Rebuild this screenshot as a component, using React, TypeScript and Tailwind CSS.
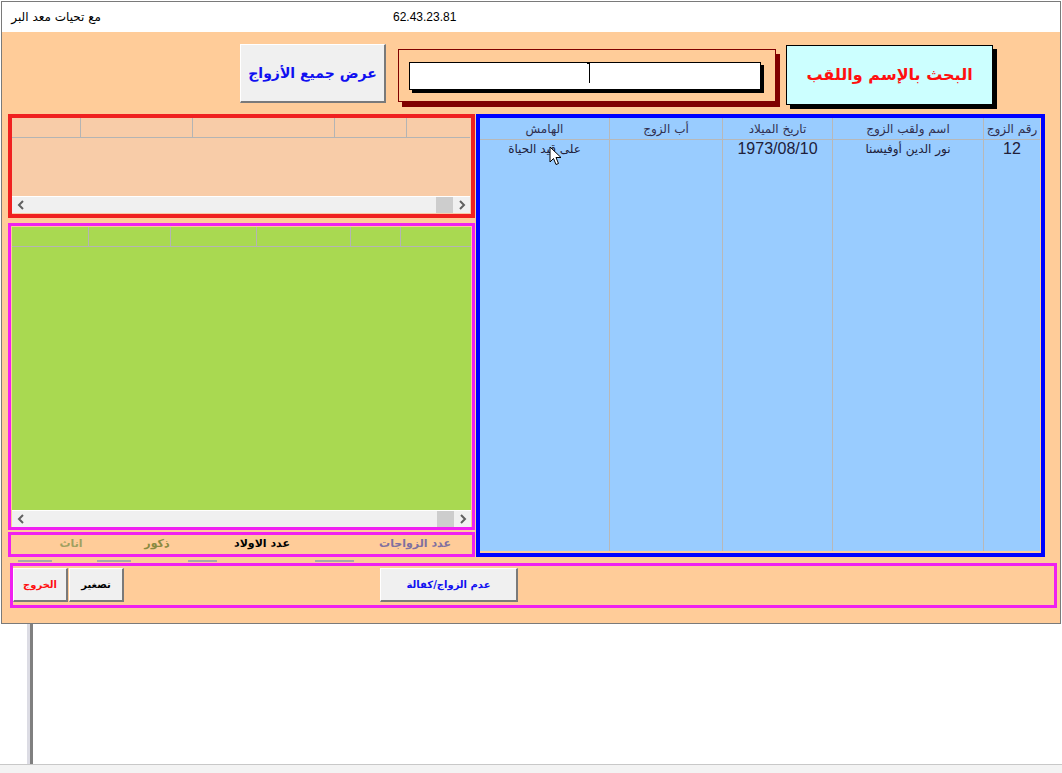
import React from 'react';

const AR = { fontFamily: '"DejaVu Sans", "Noto Sans", sans-serif' };
const LAT = { fontFamily: '"Liberation Sans", Arial, sans-serif' };

function Chevron({ dir }: { dir: 'l' | 'r' }) {
    return (
        <svg width="8" height="10" viewBox="0 0 8 10">
            <path
                d={dir === 'l' ? 'M6 1 L2 5 L6 9' : 'M2 1 L6 5 L2 9'}
                fill="none"
                stroke="#606060"
                strokeWidth="2"
            />
        </svg>
    );
}

function ScrollBar() {
    return (
        <div className="h-[17px] bg-[#f0f0f0] border-t border-white flex items-center">
            <div className="w-[17px] flex justify-center"><Chevron dir="l" /></div>
            <div className="flex-1" />
            <div className="w-[17px] h-[16px] bg-[#cdcdcd]" />
            <div className="w-[17px] flex justify-center"><Chevron dir="r" /></div>
        </div>
    );
}

function WinButton({ children, className }: { children: React.ReactNode; className: string }) {
    return (
        <button
            className={`bg-[#f0f0f0] border-t border-l border-t-white border-l-white border-b-2 border-r-2 border-b-[#7a7a7a] border-r-[#7a7a7a] flex items-center justify-center ${className}`}
            style={AR}
            dir="rtl"
        >
            {children}
        </button>
    );
}

const blueCols = [
    { w: 'w-[57px]', head: 'رقم الزوج', val: '12', latin: true },
    { w: 'w-[151px]', head: 'اسم ولقب الزوج', val: 'نور الدين أوفيسنا', latin: false },
    { w: 'w-[110px]', head: 'تاريخ الميلاد', val: '1973/08/10', latin: true },
    { w: 'w-[113px]', head: 'أب الزوج', val: '', latin: false },
    { w: 'w-[129px]', head: 'الهامش', val: 'على قيد الحياة', latin: false },
];

const redCols = ['w-[69px]', 'w-[112px]', 'w-[142px]', 'w-[72px]', 'w-[63px]'];
const greenCols = ['w-[77px]', 'w-[82px]', 'w-[86px]', 'w-[94px]', 'w-[50px]', 'w-[69px]'];

export default function App() {
    return (
        <div className="w-[1062px] h-[773px] bg-white relative overflow-hidden">
            {/* window */}
            <div className="ml-[1px] mt-[1px] w-[1060px] border border-[#7a7a7a]">
                {/* title */}
                <div className="h-[30px] bg-white flex items-center text-[12px] text-black">
                    <span className="ml-[9px] w-[90px]" dir="rtl" style={AR}>مع تحيات معد البر</span>
                    <span className="ml-[292px]" style={LAT}>62.43.23.81</span>
                </div>

                {/* body */}
                <div className="h-[591px] bg-[#ffcc99]">
                    {/* top controls */}
                    <div className="h-[82px] flex items-start">
                        <WinButton className="ml-[238px] mt-[12px] w-[146px] h-[59px]">
                            <span className="text-[#1010f0] text-[14px] font-bold">عرض جميع الأزواج</span>
                        </WinButton>
                        <div className="ml-[12px] mt-[17px] w-[378px] h-[53px] border border-[#800000] shadow-[4px_5px_0_#800000] pt-[12px] pl-[10px]">
                            <div className="w-[352px] h-[28px] bg-white border border-black shadow-[3px_3px_0_#000] relative">
                                <div className="absolute left-[179px] top-[0px] w-[1px] h-[20px] bg-black" />
                                <div className="absolute left-[177px] top-[0px] w-[2px] h-[1px] bg-black" />
                            </div>
                        </div>
                        <div
                            className="ml-[10px] mt-[13px] w-[207px] h-[60px] bg-[#ccffff] border border-black shadow-[4px_4px_0_#000] flex items-center justify-center"
                            dir="rtl"
                        >
                            <span className="text-[#ff1010] text-[16px] font-bold" style={AR}>البحث بالإسم واللقب</span>
                        </div>
                    </div>

                    {/* main area */}
                    <div className="ml-[6px] flex h-[443px]">
                        {/* left column */}
                        <div className="w-[467px] flex flex-col">
                            {/* red list */}
                            <div className="h-[104px] border-[4px] border-[#f02020] bg-[#f8cca8] pr-[1px] flex flex-col">
                                <div className="flex h-[20px] border-b border-[#b4b4b4]">
                                    {redCols.map((w, i) => (
                                        <div key={i} className={`${w} h-full ${i < redCols.length - 1 ? 'border-r border-[#b4b4b4]' : ''}`} />
                                    ))}
                                </div>
                                <div className="flex-1" />
                                <ScrollBar />
                                <div className="h-[1px]" />
                            </div>

                            {/* green grid */}
                            <div className="mt-[5px] h-[307px] border-[3px] border-[#f020f0] pt-[1px] px-[1px] flex flex-col">
                                <div className="flex h-[20px] bg-[#a9d951] border-b border-[#b4b4b4]">
                                    {greenCols.map((w, i) => (
                                        <div key={i} className={`${w} h-full ${i < greenCols.length - 1 ? 'border-r border-[#b4b4b4]' : ''}`} />
                                    ))}
                                </div>
                                <div className="flex-1 bg-[#a9d951]" />
                                <ScrollBar />
                            </div>

                            {/* counts */}
                            <div className="mt-[2px] h-[25px] border-[3px] border-[#f020f0] flex items-center text-[11px] font-bold" style={AR}>
                                <span className="ml-[39px] w-[42px] text-center text-[#a0a060]" dir="rtl">اناث</span>
                                <span className="ml-[45px] w-[40px] text-center text-[#8a8a40]" dir="rtl">ذكور</span>
                                <span className="ml-[45px] w-[80px] text-center text-black" dir="rtl">عدد الاولاد</span>
                                <span className="ml-[73px] w-[80px] text-center text-[#8070a0]" dir="rtl">عدد الزواجات</span>
                            </div>
                        </div>

                        {/* blue grid */}
                        <div className="ml-[1px] w-[569px] h-full border-[4px] border-[#0000ff] pr-[1px] pb-[2px]">
                            <div className="w-[560px] h-full bg-[#99ccff] flex" dir="rtl">
                                {blueCols.map((c, i) => (
                                    <div key={i} className={`${c.w} h-full flex flex-col ${i < blueCols.length - 1 ? 'border-l border-[#b8b8b8]' : ''}`}>
                                        <div className="h-[22px] border-b border-[#b8b8b8] flex items-center justify-center text-[12px] text-[#303050]" style={AR}>
                                            {c.head}
                                        </div>
                                        <div
                                            className={`h-[18px] flex items-center justify-center ${c.latin ? 'text-[16px]' : 'text-[12px]'} text-[#20203a]`}
                                            style={c.latin ? LAT : AR}
                                            dir={c.latin ? 'ltr' : 'rtl'}
                                        >
                                            {c.val}
                                        </div>
                                    </div>
                                ))}
                            </div>
                        </div>
                    </div>

                    {/* small field underlines */}
                    <div className="h-[6px] ml-[6px] flex items-start">
                        <div className="ml-[10px] mt-[3px] w-[34px] h-[2px] bg-[#a8a8a8]" />
                        <div className="ml-[45px] mt-[3px] w-[34px] h-[2px] bg-[#a8a8a8]" />
                        <div className="ml-[57px] mt-[3px] w-[29px] h-[2px] bg-[#a8a8a8]" />
                        <div className="ml-[98px] mt-[3px] w-[39px] h-[2px] bg-[#a8a8a8]" />
                    </div>

                    {/* bottom buttons */}
                    <div className="ml-[8px] w-[1047px] h-[45px] border-[3px] border-[#f020f0] pt-[2px] flex items-start">
                        <WinButton className="w-[55px] h-[34px]">
                            <span className="text-[#ff1010] text-[10px] font-bold">الخروج</span>
                        </WinButton>
                        <WinButton className="ml-[1px] w-[55px] h-[34px]">
                            <span className="text-black text-[10px] font-bold">تصغير</span>
                        </WinButton>
                        <WinButton className="ml-[256px] w-[138px] h-[34px]">
                            <span className="text-[#1010f0] text-[10px] font-bold">عدم الزواج/كفالة</span>
                        </WinButton>
                    </div>
                </div>
            </div>

            {/* area below window */}
            <div className="flex h-[140px]">
                <div className="ml-[27px] w-[3px] h-full bg-[#dcdce4]" />
                <div className="w-[3px] h-full bg-[#808080]" />
            </div>
            <div className="h-[1px] bg-[#c8c8c8]" />
            <div className="h-[9px] bg-[#f3f3f3]" />

            {/* mouse pointer */}
            <svg className="absolute left-[549px] top-[146px]" width="13" height="21" viewBox="0 0 13 21">
                <path d="M1 1 L1 16 L4.5 12.5 L7 18.5 L9.5 17.5 L7 11.5 L12 11.5 Z" fill="#fff" stroke="#000" strokeWidth="1" />
            </svg>
        </div>
    );
}
